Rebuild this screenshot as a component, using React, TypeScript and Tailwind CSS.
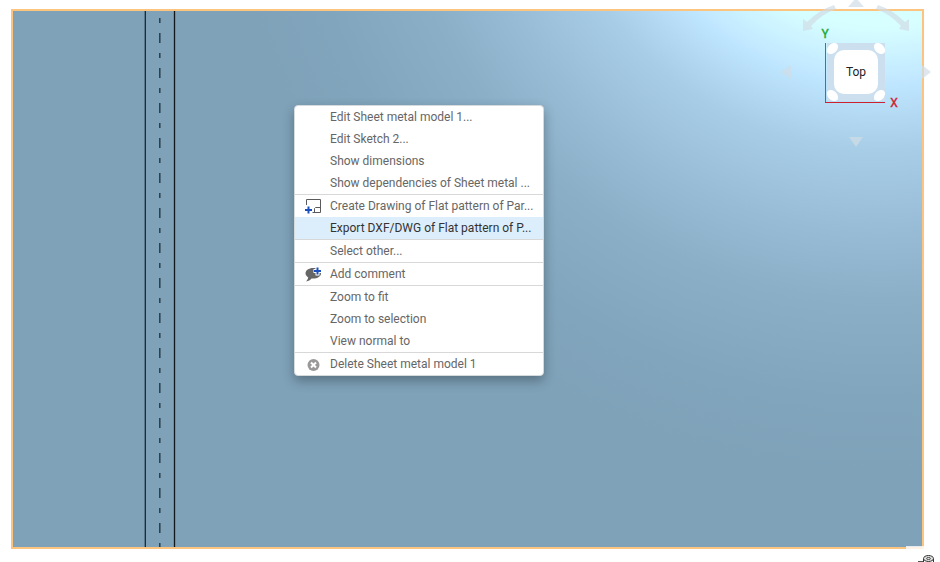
import { ReactNode } from 'react';
import clsx from 'clsx';

interface MenuItem {
  label: string;
  icon?: ReactNode;
  active?: boolean;
}

const DrawingIcon = () => (
  <svg width="18" height="16" viewBox="0 0 18 16" fill="none" aria-hidden="true">
    <path d="M2.500 7V1.500H16.500V14.500H8.500" stroke="#5a5a5a" />
    <path d="M10.500 14V10.500L11.500 9.500H16.500" stroke="#5a5a5a" />
    <path d="M4.500 8.500V15.500M1 12H8" stroke="#1a4fc0" strokeWidth="2" />
  </svg>
);

const CommentIcon = () => (
  <svg width="18" height="16" viewBox="0 0 18 16" fill="none" aria-hidden="true">
    <path
      d="M9 2C4.800 2 1.500 4.300 1.500 7.300C1.500 9 2.600 10.500 4.200 11.500C4 13 3.200 14.200 2 15.500C4.500 15 6.500 14 7.600 12.500C13 13 17 10.500 17 7.500C17 4.300 13.500 2 9 2Z"
      fill="#666"
    />
    <path d="M13.500 1V9.500M9.500 5H17.500" stroke="#fff" strokeWidth="4" />
    <path d="M13.500 1.500V8.500M10 5H17" stroke="#1a4fc0" strokeWidth="2" />
  </svg>
);

const DeleteIcon = () => (
  <svg width="18" height="16" viewBox="0 0 18 16" fill="none" aria-hidden="true">
    <circle cx="9.500" cy="9" r="6" fill="#999" />
    <path d="M7 6.500L12 11.500M12 6.500L7 11.500" stroke="#fff" strokeWidth="2" />
  </svg>
);

const menuGroups: MenuItem[][] = [
  [
    { label: 'Edit Sheet metal model 1...' },
    { label: 'Edit Sketch 2...' },
    { label: 'Show dimensions' },
    { label: 'Show dependencies of Sheet metal ...' },
  ],
  [
    { label: 'Create Drawing of Flat pattern of Par...', icon: <DrawingIcon /> },
    { label: 'Export DXF/DWG of Flat pattern of P...', active: true },
  ],
  [{ label: 'Select other...' }],
  [{ label: 'Add comment', icon: <CommentIcon /> }],
  [{ label: 'Zoom to fit' }, { label: 'Zoom to selection' }, { label: 'View normal to' }],
  [{ label: 'Delete Sheet metal model 1', icon: <DeleteIcon /> }],
];

function ContextMenu() {
  return (
    <div
      role="menu"
      className="absolute left-[281px] top-[94px] w-[250px] overflow-hidden rounded border border-[#d5dadd] bg-white shadow-[0_5px_12px_rgba(0,0,0,0.3)]"
    >
      {menuGroups.map((group, idx) => (
        <div key={idx} role="group" className={clsx(idx > 0 && 'border-t border-[#d8d8d8]')}>
          {group.map((item) => (
            <button
              key={item.label}
              type="button"
              role="menuitem"
              className={clsx(
                'flex h-[22px] w-full items-center whitespace-nowrap pl-[9px] text-left text-xs hover:bg-[#dceefb]',
                item.active ? 'bg-[#dceefb] text-[#333]' : 'text-[#666]'
              )}
            >
              <span className="w-[26px] shrink-0">{item.icon}</span>
              {item.label}
            </button>
          ))}
        </div>
      ))}
    </div>
  );
}

function BendLines() {
  return (
    <svg className="absolute left-[130px] top-0 h-full w-[34px]" aria-hidden="true">
      <line x1="1.500" x2="1.500" y1="0" y2="100%" stroke="#5b788a" />
      <line x1="2.500" x2="2.500" y1="0" y2="100%" stroke="#1f2c36" />
      <line x1="16.500" x2="16.500" y1="0" y2="100%" stroke="#2c414e" strokeDasharray="5 10 10 10" strokeDashoffset="28" />
      <line x1="17.500" x2="17.500" y1="0" y2="100%" stroke="#4f6b7b" strokeDasharray="5 10 10 10" strokeDashoffset="28" />
      <line x1="31.500" x2="31.500" y1="0" y2="100%" stroke="#6a8da3" strokeWidth="3" />
      <line x1="31.500" x2="31.500" y1="0" y2="100%" stroke="#12191e" />
    </svg>
  );
}

function ViewCube() {
  return (
    <svg
      className="absolute right-0 top-0 h-[160px] w-[160px]"
      viewBox="780 0 160 160"
      role="img"
      aria-label="View cube"
    >
      <g fill="#d0dde6" fillOpacity="0.7">
        <path d="M848 7L856 -2L864 7Z" />
        <path d="M791 65V79L781 72Z" />
        <path d="M922 65V79L931 72Z" />
        <path d="M849 137H863L856 147Z" />
        <path d="M834 5Q819 10 807 22L803 19V31L813 29L811 26Q822 14 836 9Z" />
        <path d="M878 5Q893 10 905 22L909 19V31L899 29L901 26Q890 14 876 9Z" />
      </g>
      <rect x="827" y="43" width="58" height="58" fill="#cbdfee" />
      <g fill="#fff">
        <ellipse cx="832.500" cy="48.500" rx="6.500" ry="4.500" transform="rotate(-45 832.500 48.500)" />
        <ellipse cx="879.500" cy="48.500" rx="6.500" ry="4.500" transform="rotate(45 879.500 48.500)" />
        <ellipse cx="832.500" cy="95.500" rx="6.500" ry="4.500" transform="rotate(45 832.500 95.500)" />
        <ellipse cx="879.500" cy="95.500" rx="6.500" ry="4.500" transform="rotate(-45 879.500 95.500)" />
        <rect x="834" y="50" width="44" height="44" rx="10" />
      </g>
      <path d="M825.500 43V102" stroke="#1d9a3c" />
      <path d="M825 102.500H885" stroke="#d02030" />
      <g fontSize="12" textAnchor="middle">
        <text x="856" y="76" fill="#222">Top</text>
        <text x="825" y="38" fill="#22a82c" stroke="#22a82c" strokeWidth="0.4">Y</text>
        <text x="894" y="107" fill="#d02030" stroke="#d02030" strokeWidth="0.4">X</text>
      </g>
    </svg>
  );
}

function CornerTool() {
  return (
    <svg className="absolute bottom-0 right-0 h-[16px] w-[34px]" viewBox="0 0 34 16" fill="none" aria-hidden="true">
      <rect x="0" y="0" width="18" height="3" fill="#fff" fillOpacity="0.8" />
      <path d="M12 15.500H18" stroke="#555" />
      <ellipse cx="22.500" cy="12.500" rx="5" ry="3" stroke="#333" fill="#ddd" />
      <ellipse cx="22.500" cy="12.500" rx="2" ry="1" stroke="#555" />
      <path d="M17.500 13V16M27.500 13V16" stroke="#333" />
    </svg>
  );
}

export default function App() {
  return (
    <main className="relative flex min-h-screen flex-col overflow-hidden bg-white pb-[13px] pl-[11px] pr-4 pt-[9px] font-[Roboto,'Liberation_Sans',sans-serif]">
      <section
        aria-label="Flat pattern"
        className="relative flex-1 border-2 border-[#fdc47f] bg-[#7fa2b9] bg-[radial-gradient(circle_at_calc(100%_-_42px)_-196px,#d8ffff_210px,#bfe6ff_270px,#a8cde6_335px,#98bcd5_415px,#8aafc7_485px,#81a5bc_585px,#7fa2b9_660px)]"
      >
        <BendLines />
        <ContextMenu />
      </section>
      <ViewCube />
      <CornerTool />
    </main>
  );
}
